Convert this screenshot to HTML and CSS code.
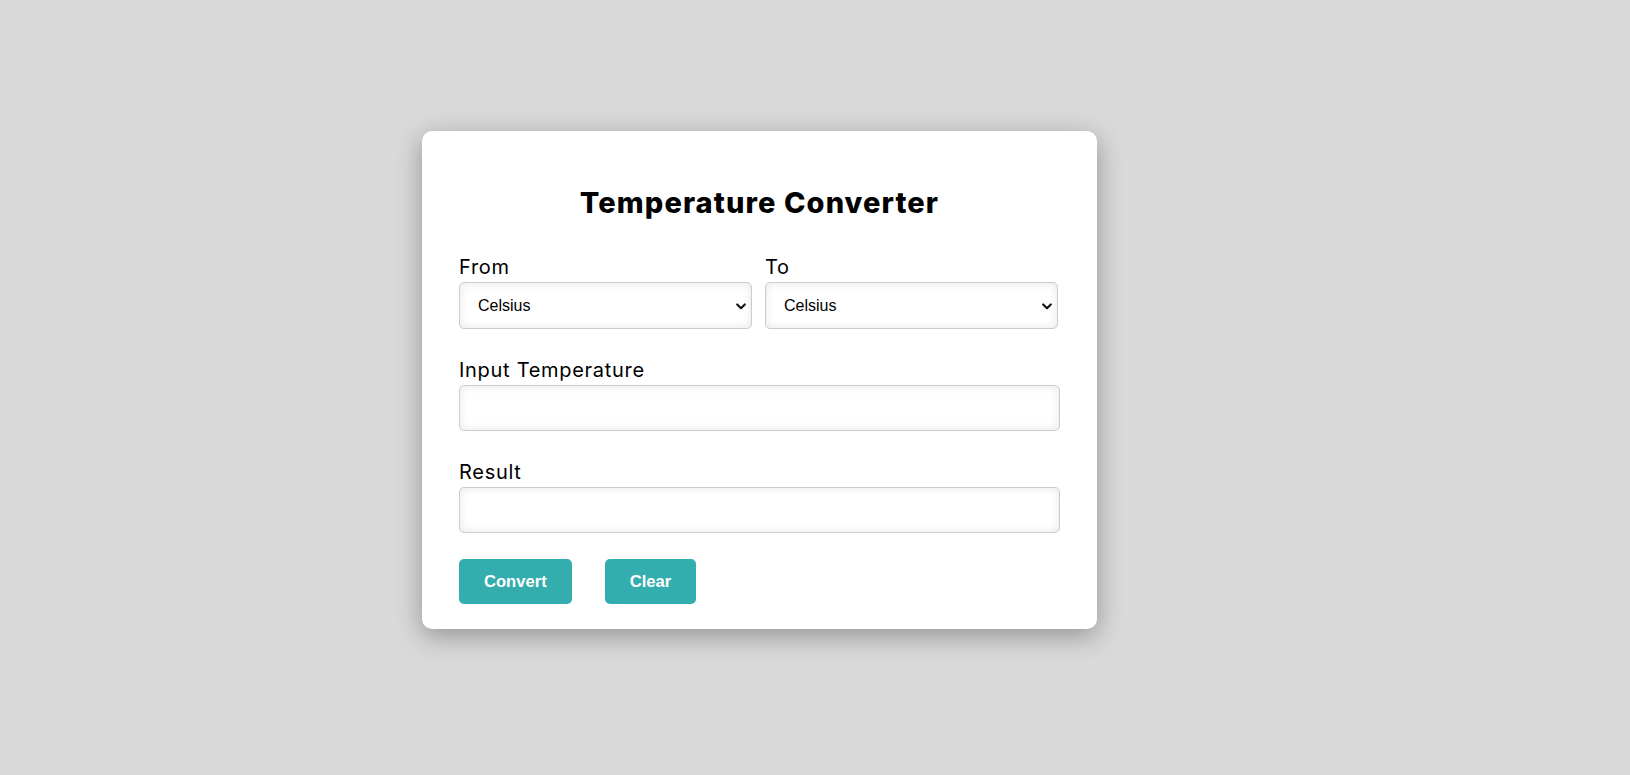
FILE: index.html
```html
<!DOCTYPE html>
<html lang="en">
<head>
<meta charset="utf-8">
<title>Temperature Converter</title>
<link rel="stylesheet" href="styles.css">
</head>
<body>
  <div class="card">
    <h1 class="title">Temperature Converter</h1>
    <div class="units">
      <div class="field">
        <label class="label" for="from">From</label>
        <div class="select-wrap">
          <select id="from" class="select">
            <option>Celsius</option>
            <option>Fahrenheit</option>
            <option>Kelvin</option>
          </select>
          <svg class="chevron" width="10" height="7" viewBox="0 0 10 7" aria-hidden="true"><path d="M1.2 1.4 L5 5.2 L8.8 1.4" fill="none" stroke="#111" stroke-width="2.1" stroke-linecap="round" stroke-linejoin="round"/></svg>
        </div>
      </div>
      <div class="field">
        <label class="label" for="to">To</label>
        <div class="select-wrap">
          <select id="to" class="select">
            <option>Celsius</option>
            <option>Fahrenheit</option>
            <option>Kelvin</option>
          </select>
          <svg class="chevron" width="10" height="7" viewBox="0 0 10 7" aria-hidden="true"><path d="M1.2 1.4 L5 5.2 L8.8 1.4" fill="none" stroke="#111" stroke-width="2.1" stroke-linecap="round" stroke-linejoin="round"/></svg>
        </div>
      </div>
    </div>
    <div class="field field-spaced">
      <label class="label" for="input">Input Temperature</label>
      <input id="input" class="text-input" type="text">
    </div>
    <div class="field field-spaced">
      <label class="label" for="result">Result</label>
      <input id="result" class="text-input" type="text" readonly>
    </div>
    <div class="actions">
      <button class="btn" type="button">Convert</button>
      <button class="btn" type="button">Clear</button>
    </div>
  </div>
</body>
</html>
```
FILE: styles.css
```css
* {
  box-sizing: border-box;
}

body {
  margin: 0;
  background: #d9d9d9;
  font-family: "Inter", "Liberation Sans", sans-serif;
  min-height: 775px;
}

.card {
  width: 675px;
  margin: 131px 0 0 422px;
  background: #ffffff;
  border-radius: 10px;
  padding: 54px 37px 25px 37px;
  box-shadow: 0 7px 26px rgba(0, 0, 0, 0.32);
}

.title {
  margin: 0 0 35px 0;
  font-size: 29px;
  line-height: 35px;
  font-weight: 800;
  letter-spacing: 1.1px;
  text-align: center;
  color: #000;
}

.units {
  display: grid;
  grid-template-columns: 293px 293px;
  column-gap: 13px;
}

.field {
  display: flex;
  flex-direction: column;
}

.field-spaced {
  margin-top: 29px;
}

.label {
  display: block;
  font-size: 20px;
  line-height: 24px;
  letter-spacing: 0.7px;
  margin-bottom: 3px;
  color: #000;
}

.select-wrap {
  position: relative;
}

.select {
  -webkit-appearance: none;
  appearance: none;
  display: block;
  height: 47px;
  width: 100%;
  border: 1px solid #cccccc;
  border-radius: 5px;
  background-color: #fff;
  box-shadow: inset 0 0 10px rgba(0, 0, 0, 0.1);
  font-family: "Liberation Sans", Arial, sans-serif;
  font-size: 16px;
  color: #000;
  padding: 0 24px 0 18px;
}

.chevron {
  position: absolute;
  right: 6px;
  top: 21px;
  pointer-events: none;
}

.text-input {
  height: 46px;
  width: 100%;
  border: 1px solid #cccccc;
  border-radius: 5px;
  background: #fff;
  box-shadow: inset 0 0 10px rgba(0, 0, 0, 0.1);
  font-family: "Liberation Sans", Arial, sans-serif;
  font-size: 16px;
  padding: 0 14px;
}

.actions {
  display: flex;
  gap: 33px;
  margin-top: 26px;
}

.btn {
  height: 45px;
  padding: 0 25px;
  border: none;
  border-radius: 5px;
  background: #33adad;
  color: #fff;
  font-family: "Liberation Sans", Arial, sans-serif;
  font-weight: 700;
  font-size: 16.6px;
}
```
